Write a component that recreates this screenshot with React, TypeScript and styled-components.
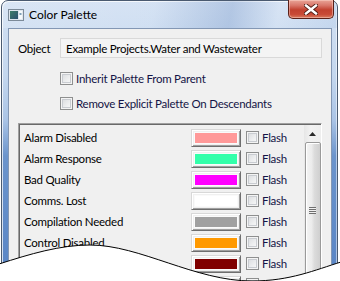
import React from "react";
import styled, { createGlobalStyle } from "styled-components";

const Global = createGlobalStyle`
  html, body { margin: 0; padding: 0; background: #fff; }
  body {
    font-family: Lato, "Liberation Sans", sans-serif;
    font-size: 11.5px;
    letter-spacing: -0.25px;
    color: #000;
  }
  * { box-sizing: border-box; }
`;

const Stage = styled.div`
  position: relative;
  width: 340px;
  height: 281px;
  overflow: hidden;
  background: #fff;
  padding-left: 1px;
`;

const Window = styled.div`
  width: 337px;
  height: 300px;
  border: 1px solid #4a5a70;
  border-radius: 7px 7px 0 0;
  background: linear-gradient(
    180deg,
    #d3e1f3 0%,
    #c4d7ee 25%,
    #aac4e6 40%,
    #6b94cc 52%,
    #5582c4 100%
  );
  box-shadow: inset 1px 1px 0 rgba(255, 255, 255, 0.75),
    inset -1px 0 0 rgba(255, 255, 255, 0.5);
  display: flex;
  flex-direction: column;
  padding: 0 5px 0 6px;
`;

const TitleBar = styled.div`
  height: 27px;
  margin: 0 -5px 0 -6px;
  padding: 0 3px 0 6px;
  display: flex;
  align-items: center;
  border-radius: 6px 6px 0 0;
  background: linear-gradient(
    100deg,
    rgba(255, 255, 255, 0.15) 0%,
    rgba(255, 255, 255, 0.05) 45%,
    rgba(70, 110, 175, 0.22) 68%,
    rgba(255, 255, 255, 0.1) 82%,
    rgba(120, 160, 210, 0.12) 100%
  );
`;

const TitleIcon = styled.svg`
  width: 16px;
  height: 12px;
  flex: none;
`;

const TitleText = styled.span`
  margin-left: 5px;
  font-size: 12px;
  letter-spacing: 0;
  color: #000;
  flex: 1;
`;

const CloseButton = styled.div`
  align-self: flex-start;
  margin-top: -1px;
  width: 46px;
  height: 19px;
  border: 1px solid #5a2018;
  border-top: none;
  border-radius: 0 0 5px 5px;
  background: linear-gradient(
    180deg,
    #e9a597 0%,
    #d9776a 30%,
    #c2412f 55%,
    #c84a36 80%,
    #d87a5e 100%
  );
  box-shadow: inset 0 0 0 1px rgba(255, 220, 210, 0.45);
  display: flex;
  align-items: center;
  justify-content: center;
`;

const Client = styled.div`
  flex: 1;
  border: 1px solid #8397b4;
  background: #f0f0f0;
  padding: 9px 9px 0 9px;
  display: flex;
  flex-direction: column;
`;

const FieldRow = styled.div`
  display: flex;
  align-items: center;
  height: 20px;
`;

const FieldLabel = styled.span`
  width: 42px;
  flex: none;
`;

const ReadOnlyBox = styled.div`
  width: 262px;
  height: 20px;
  border: 1px solid #d9d9d9;
  background: #f4f4f4;
  padding-left: 5px;
  display: flex;
  align-items: center;
  white-space: nowrap;
`;

const CheckRow = styled.label<{ $first?: boolean }>`
  display: flex;
  align-items: center;
  height: 25px;
  padding-left: 42px;
  margin-top: ${(p) => (p.$first ? "8px" : "0")};
  color: #141446;
`;

const Box = styled.span`
  width: 13px;
  height: 13px;
  flex: none;
  border: 1px solid #8e8f8f;
  background: linear-gradient(135deg, #d6d8db 0%, #eeeff0 60%, #fbfbfb 100%);
  box-shadow: inset 0 0 0 1px #f4f4f4, inset 0 0 0 2px #c9ccd1;
`;

const CheckText = styled.span`
  margin-left: 3px;
  white-space: nowrap;
`;

const ListBox = styled.div`
  margin-top: 7px;
  width: 304px;
  flex: 1;
  display: flex;
  border-top: 1px solid #a0a0a0;
  border-left: 1px solid #a0a0a0;
  border-right: 1px solid #ffffff;
  box-shadow: inset 1px 1px 0 #696969;
  background: #f0f0f0;
  padding: 1px 0 0 1px;
`;

const Rows = styled.div`
  flex: 1;
  padding-top: 2px;
  display: flex;
  flex-direction: column;
`;

const Row = styled.div`
  height: 21px;
  display: flex;
  align-items: center;
  flex: none;
`;

const RowLabel = styled.span`
  width: 171px;
  padding-left: 4px;
  flex: none;
  white-space: nowrap;
`;

const Swatch = styled.div`
  width: 50px;
  height: 18px;
  flex: none;
  border: 1px solid;
  border-color: #d8d8d8 #6e6e6e #6e6e6e #d8d8d8;
  box-shadow: inset 1px 1px 0 #ffffff, inset -1px -1px 0 #a0a0a0;
  background: #f0f0f0;
  padding: 2px;
  margin-top: 1px;
`;

const SwatchFill = styled.div<{ $color: string }>`
  width: 100%;
  height: 100%;
  background: ${(p) => p.$color};
  border: 1px solid #fafafa;
`;

const RowCheck = styled.span`
  display: flex;
  align-items: center;
  margin-left: 5px;
  color: #141446;
`;

const Scrollbar = styled.div`
  width: 17px;
  flex: none;
  background: linear-gradient(90deg, #e6e6e6, #f2f2f2 40%, #eeeeee);
  display: flex;
  flex-direction: column;
  align-items: center;
`;

const ArrowCell = styled.div`
  height: 17px;
  width: 17px;
  display: flex;
  align-items: center;
  justify-content: center;
`;

const Thumb = styled.div`
  width: 16px;
  flex: 1;
  border: 1px solid #9a9a9a;
  border-radius: 2px;
  background: linear-gradient(
    90deg,
    #f4f4f4 0%,
    #ececec 40%,
    #dcdcdc 60%,
    #cfcfcf 100%
  );
  box-shadow: inset 1px 1px 0 #ffffff;
  display: flex;
  justify-content: center;
  padding-top: 64px;
`;

const Grip = styled.div`
  width: 7px;
  height: 7px;
  background: repeating-linear-gradient(
    180deg,
    #6f6f6f 0px,
    #6f6f6f 1px,
    #f0f0f0 1px,
    #f0f0f0 2px
  );
`;

const Tear = styled.svg`
  position: absolute;
  left: 0;
  top: 0;
  pointer-events: none;
`;

const rows: { name: string; color: string }[] = [
  { name: "Alarm Disabled", color: "#ff9999" },
  { name: "Alarm Response", color: "#33ffaa" },
  { name: "Bad Quality", color: "#ff00ff" },
  { name: "Comms. Lost", color: "#ffffff" },
  { name: "Compilation Needed", color: "#a0a0a0" },
  { name: "Control Disabled", color: "#ff9900" },
  { name: "Control Enabled", color: "#800000" },
  { name: "Control Override", color: "#cccccc" },
];

export default function App() {
  return (
    <>
      <Global />
      <Stage>
        <Window>
          <TitleBar>
            <TitleIcon viewBox="0 0 16 12">
              <defs>
                <linearGradient id="ig" x1="0" y1="0" x2="1" y2="1">
                  <stop offset="0" stopColor="#3f7f6a" />
                  <stop offset="1" stopColor="#2b4f6f" />
                </linearGradient>
              </defs>
              <rect x="0.5" y="0.5" width="15" height="11" fill="#dfe6ee" stroke="#7c8a99" />
              <rect x="2" y="2" width="8" height="8" fill="url(#ig)" />
              <rect x="11" y="2" width="3" height="8" fill="#f6f9fb" />
              <rect x="11.5" y="4" width="2" height="2" fill="#7fa0b8" />
            </TitleIcon>
            <TitleText>Color Palette</TitleText>
            <CloseButton>
              <svg width="14" height="11" viewBox="0 0 14 11">
                <path
                  d="M2 1.5 L12 9.5 M12 1.5 L2 9.5"
                  stroke="#4a1a12"
                  strokeWidth="4.2"
                  strokeLinecap="square"
                />
                <path
                  d="M2 1.5 L12 9.5 M12 1.5 L2 9.5"
                  stroke="#ffffff"
                  strokeWidth="2.4"
                  strokeLinecap="square"
                />
              </svg>
            </CloseButton>
          </TitleBar>
          <Client>
            <FieldRow>
              <FieldLabel>Object</FieldLabel>
              <ReadOnlyBox>Example Projects.Water and Wastewater</ReadOnlyBox>
            </FieldRow>
            <CheckRow $first>
              <Box />
              <CheckText>Inherit Palette From Parent</CheckText>
            </CheckRow>
            <CheckRow>
              <Box />
              <CheckText>Remove Explicit Palette On Descendants</CheckText>
            </CheckRow>
            <ListBox>
              <Rows>
                {rows.map((r) => (
                  <Row key={r.name}>
                    <RowLabel>{r.name}</RowLabel>
                    <Swatch>
                      <SwatchFill $color={r.color} />
                    </Swatch>
                    <RowCheck>
                      <Box />
                      <CheckText>Flash</CheckText>
                    </RowCheck>
                  </Row>
                ))}
              </Rows>
              <Scrollbar>
                <ArrowCell>
                  <svg width="7" height="4" viewBox="0 0 7 4">
                    <path d="M0 4 L3.5 0 L7 4 Z" fill="#2a2a2a" />
                  </svg>
                </ArrowCell>
                <Thumb>
                  <Grip />
                </Thumb>
              </Scrollbar>
            </ListBox>
          </Client>
        </Window>
        <Tear width="340" height="281" viewBox="0 0 340 281">
          <path
            d="M-1 264 C 30 254 60 245 90 245 C 140 245 195 281 252 281 C 290 281 315 270 341 262 L 341 282 L -1 282 Z"
            fill="#ffffff"
            stroke="#000000"
            strokeWidth="1"
          />
        </Tear>
      </Stage>
    </>
  );
}
